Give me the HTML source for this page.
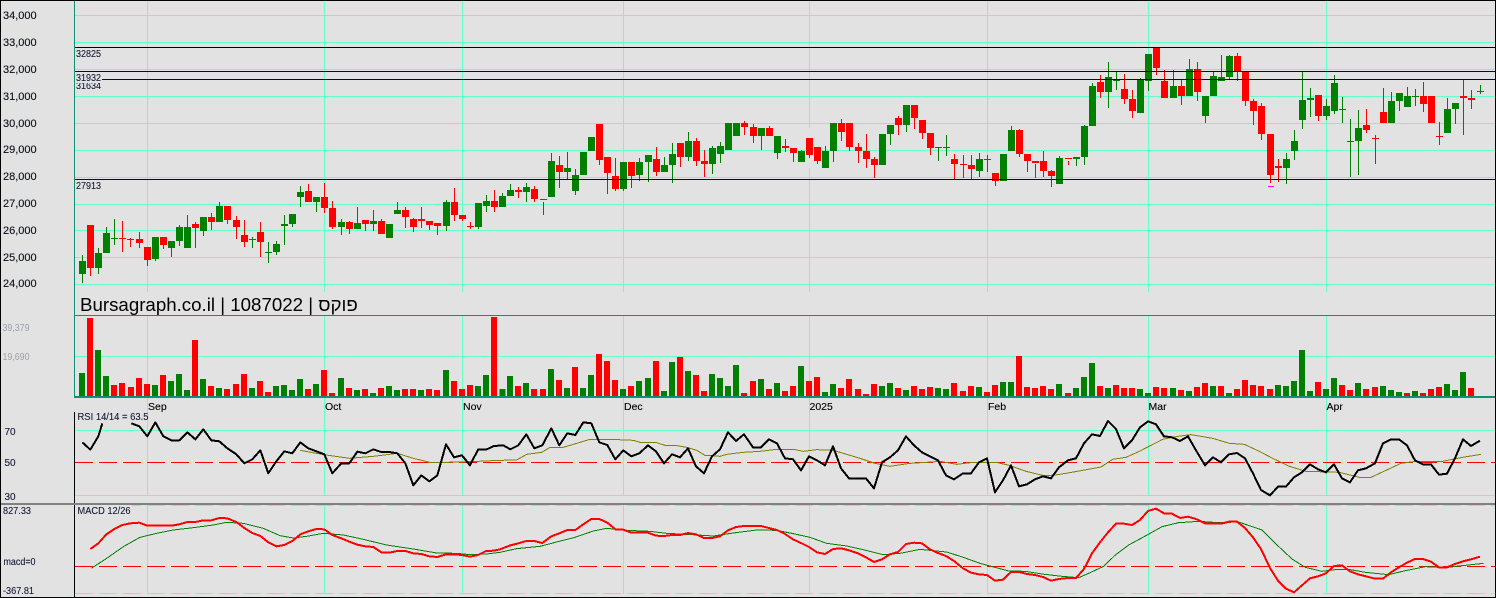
<!DOCTYPE html>
<html><head><meta charset="utf-8"><title>Bursagraph</title>
<style>
html,body{margin:0;padding:0;background:#e2e2e2;width:1496px;height:598px;overflow:hidden}
svg{display:block}
text{font-family:"Liberation Sans",Arial,sans-serif}
.l{font-size:11px;fill:#0c1018;stroke:#0c1018;stroke-width:.12}
.m{font-size:10.5px;fill:#000;stroke:#000;stroke-width:.12}
.s{font-size:10px;fill:#101530;stroke:#101530;stroke-width:.08}
.v{font-size:10px;fill:#9aa2a8}
.w{fill:none;stroke-width:3}
.b{fill:none;stroke-width:21}
.vb{fill:none;stroke-width:18}
.g{stroke:#008000}.r{stroke:#f00}
.ln{fill:none;stroke-linejoin:round}
</style></head><body>
<svg width="1496" height="598" viewBox="0 0 1496 598" xmlns="http://www.w3.org/2000/svg">
<rect width="1496" height="598" fill="#e2e2e2"/>
<g shape-rendering="crispEdges">
<!-- price grid -->
<path fill="#66ffcc" d="M74 15h1421v1h-1421zM74 42h1421v1h-1421zM74 69h1421v1h-1421zM74 96h1421v1h-1421zM74 123h1421v1h-1421zM74 150h1421v1h-1421zM74 177h1421v1h-1421zM74 204h1421v1h-1421zM74 230h1421v1h-1421zM74 257h1421v1h-1421zM74 284h1421v1h-1421z"/>
<path fill="#66ffcc" d="M147 1h1v291h-1zM324 1h1v291h-1zM462 1h1v291h-1zM623 1h1v291h-1zM809 1h1v127h-1zM809 168h1v124h-1zM987 1h1v291h-1zM1148 1h1v291h-1zM1326 1h1v291h-1z"/>
<path fill="#66ffcc" d="M147 315h1v180h-1zM324 315h1v180h-1zM462 315h1v180h-1zM623 315h1v180h-1zM809 315h1v180h-1zM987 315h1v180h-1zM1148 315h1v180h-1zM1326 315h1v180h-1z"/>
<path fill="#66ffcc" d="M147 505h1v89h-1zM324 505h1v89h-1zM462 505h1v89h-1zM623 505h1v89h-1zM809 505h1v89h-1zM987 505h1v89h-1zM1148 505h1v89h-1zM1326 505h1v89h-1z"/>
<path fill="#66ffcc" d="M74 356h1421v1h-1421zM74 430h1421v1h-1421zM74 495h1421v1h-1421z"/>
<path fill="none" stroke="#66ffcc" stroke-dasharray="18 6" d="M75 505.5H1495M75 593.5H1495"/>
<!-- crop 1 -->
<g transform="scale(.33333)">
<path class="w g" d="M247 765V849M295 744V822M319 681V759M343 657V735M466 711V783M514 723V771M538 675V738M562 645V744M610 651V708M658 606V666M757 711V744M805 726V789M829 723V765M853 645V735M877 642V681M901 558V621M949 591V636M1024 657V705M1072 621V687M1120 630V693"/>
<path class="b g" d="M247 783V822M295 759V804M319 699V759M343 714V717M466 711V777M514 723V744M538 681V723M562 681V744M610 651V693M658 618V666M757 717V720M805 756V759M829 732V756M853 672V678M877 642V672M901 576V591M949 591V606M1024 666V681M1072 669V687M1120 663V672"/>
<path class="w r" d="M271 675V828M367 663V756M391 714V741M418 696V744M442 741V798M490 711V747M586 666V744M634 639V690M682 618V672M709 648V717M733 660V741M781 666V771M925 552V606M973 549V639M997 603V687M1048 663V702M1096 660V693"/>
<path class="b r" d="M271 675V804M367 714V717M391 717V720M418 717V729M442 741V780M490 711V735M586 672V684M634 651V666M682 618V660M709 660V681M733 705V726M781 696V726M925 573V606M973 591V624M997 624V681M1048 666V687M1096 660V672"/>
</g>
<!-- crop 2 -->
<g transform="translate(375 80) scale(.33333)">
<path class="w g" d="M43 432V474M67 366V402M214 360V453M310 369V447M334 345V396M382 339V381M406 312V348M454 309V366M529 219V351M577 216V297M601 267V345M625 216V285M649 171V213M745 246V333M793 234V303M820 225V306M868 231V276M892 189V309M940 156V243M1012 198V282M1036 186V249M1060 129V210M1084 129V168"/>
<path class="b g" d="M43 432V474M67 390V402M214 366V438M310 369V441M334 363V378M382 348V381M406 330V348M454 321V336M529 243V351M577 264V276M601 285V333M625 216V285M649 171V213M745 246V327M793 246V285M820 225V246M868 255V276M892 222V255M940 183V231M1012 204V252M1036 198V222M1060 129V210M1084 129V168"/>
<path class="w r" d="M19 417V462M91 381V444M115 414V456M139 381V444M163 423V450M187 429V465M238 324V423M262 405V423M286 426V447M358 330V396M430 321V354M478 318V366M505 366V405M553 228V324M673 132V255M697 231V342M721 234V333M769 246V324M844 201V288M916 189V261M964 174V258M988 210V291M1108 123V165"/>
<path class="b r" d="M19 423V462M91 390V411M115 417V441M139 417V423M163 423V435M187 429V438M238 366V405M262 405V417M286 438V441M358 363V381M430 330V336M478 327V357M505 357V360M553 255V276M673 132V240M697 231V279M721 288V327M769 246V288M844 237V276M916 189V231M964 183V243M988 243V252M1108 129V141"/>
</g>
<!-- crop 3 -->
<g transform="translate(750 40) scale(.33333)">
<path class="w g" d="M34 264V330M82 288V357M154 330V366M226 318V384M250 249V366M397 282V375M421 255V315M469 195V276M565 321V363M589 285V348M688 339V411M712 345V396M760 342V423M784 258V333M928 348V432M979 351V378M1003 255V375M1027 129V258M1075 66V204M1099 96V150"/>
<path class="b g" d="M34 264V288M82 288V339M154 333V366M226 333V384M250 249V333M397 282V375M421 255V282M469 195V255M565 321V324M589 321V324M688 357V393M712 357V360M760 342V423M784 270V333M928 354V432M979 351V357M1003 258V351M1027 138V258M1075 111V156M1099 120V123"/>
<path class="w r" d="M10 252V309M58 258V288M106 297V336M130 324V366M178 294V354M202 321V372M274 237V303M298 249V333M325 309V369M349 282V384M373 351V414M445 228V285M493 195V267M517 240V297M541 279V345M613 342V417M640 345V414M664 345V417M736 399V438M808 267V351M832 342V396M856 372V414M880 333V411M904 390V441M955 363V375M1051 105V174"/>
<path class="b r" d="M10 261V288M58 264V288M106 318V324M130 324V339M178 294V345M202 321V363M274 249V276M298 249V321M325 321V333M349 333V357M373 357V375M445 234V255M493 195V234M517 240V279M541 279V324M613 357V372M640 372V375M664 375V387M736 399V423M808 270V342M832 342V363M856 363V369M880 363V393M904 393V408M955 354V357M1051 126V156"/>
</g>
<!-- crop 4 -->
<g transform="translate(1121 30) scale(.33333)">
<path class="w g" d="M58 144V249M82 72V183M157 120V204M205 87V198M253 198V279M277 126V198M301 75V153M325 75V147M496 369V462M520 300V390M544 126V297M568 174V261M616 207V270M640 135V252M664 201V279M688 267V441M712 240V435M811 186V279M835 189V243M859 171V231M883 177V228M979 204V309M1003 219V282M1078 165V192"/>
<path class="b g" d="M58 150V249M82 72V153M157 168V204M205 117V198M253 198V258M277 138V198M301 141V153M325 78V141M496 387V414M520 333V363M544 210V270M568 204V210M616 228V258M640 159V243M664 237V240M688 333V336M712 294V333M811 213V279M835 189V213M859 198V231M883 198V201M979 237V309M1003 219V237M1078 183V186"/>
<path class="w r" d="M10 132V222M34 180V264M106 51V135M130 120V204M181 147V225M229 96V213M349 69V153M373 126V228M397 207V285M421 219V330M448 312V459M472 387V456M592 195V273M736 237V309M763 315V402M787 174V279M907 156V246M931 198V279M955 276V345M1027 150V315M1051 180V237"/>
<path class="b r" d="M10 177V207M34 207V243M106 51V114M130 153V204M181 168V198M229 117V186M349 78V126M373 126V213M397 213V243M421 228V312M448 312V435M472 408V414M592 195V258M736 285V300M763 324V327M787 246V279M907 198V222M931 198V279M955 318V321M1027 198V204M1051 204V210"/>
</g>
<rect x="1268" y="186" width="6" height="1" fill="#ff00ff"/>
<!-- level lines -->
<path fill="none" stroke="#000" d="M74 47.5H1495"/>
<path fill="none" stroke="#000070" d="M74 71.5H1495M74 79.5H1495M74 179.5H1495"/>
</g>
<text class="s" x="76" y="89" textLength="25" lengthAdjust="spacingAndGlyphs">31634</text>
<rect x="75" y="72" width="27" height="11" fill="#e2e2e2"/>
<text class="s" x="76" y="57" textLength="25" lengthAdjust="spacingAndGlyphs">32825</text>
<text class="s" x="76" y="81" textLength="25" lengthAdjust="spacingAndGlyphs">31932</text>
<text class="s" x="76" y="189" textLength="25" lengthAdjust="spacingAndGlyphs">27913</text>
<g class="axis">
<text class="l" x="3" y="19">34,000</text>
<text class="l" x="3" y="46">33,000</text>
<text class="l" x="3" y="73">32,000</text>
<text class="l" x="3" y="100">31,000</text>
<text class="l" x="3" y="127">30,000</text>
<text class="l" x="3" y="153">29,000</text>
<text class="l" x="3" y="180">28,000</text>
<text class="l" x="3" y="207">27,000</text>
<text class="l" x="3" y="234">26,000</text>
<text class="l" x="3" y="261">25,000</text>
<text class="l" x="3" y="287">24,000</text>
</g>
<text x="80" y="311" font-size="18.7" fill="#000">Bursagraph.co.il | 1087022 | פוקס</text>
<text class="v" x="2.5" y="331" textLength="27" lengthAdjust="spacingAndGlyphs">39,379</text>
<text class="v" x="2.5" y="360" textLength="27" lengthAdjust="spacingAndGlyphs">19,690</text>
<g shape-rendering="crispEdges">
<!-- volume -->
<g transform="translate(0 290) scale(.33333)">
<path class="vb g" d="M246 249V318M294 180V318M318 258V318M465 285V318M513 273V318M537 252V318M561 300V318M609 267V318M657 294V318M756 294V318M828 288V318M852 285V318M876 300V318M900 267V318M948 282V318M1023 264V318M1071 300V318M1119 309V318M1167 288V318M1191 300V318M1263 300V318M1338 240V318M1434 288V318M1458 255V318"/>
<path class="vb r" d="M270 84V318M342 285V318M366 279V318M393 291V318M417 264V318M441 282V318M489 255V318M585 150V318M633 288V318M681 297V318M708 282V318M732 252V318M780 273V318M804 306V318M924 297V318M972 240V318M996 309V318M1047 294V318M1095 297V318M1143 294V318M1215 297V318M1239 297V318M1287 297V318M1311 300V318M1362 273V318M1386 297V318M1410 285V318M1482 81V318"/>
</g>
<g transform="translate(500 310) scale(.33333)">
<path class="vb g" d="M7 237V258M30 198V258M78 219V258M153 177V258M201 234V258M249 234V258M273 195V258M369 237V258M417 213V258M444 204V258M492 243V258M516 156V258M564 183V258M636 192V258M660 204V258M684 228V258M708 165V258M783 207V258M831 219V258M903 168V258M975 246V258M999 222V258M1146 228V258M1170 219V258M1218 240V258M1314 234V258M1338 237V258M1437 231V258"/>
<path class="vb r" d="M54 228V258M102 237V258M129 237V258M177 210V258M225 171V258M297 132V258M321 153V258M345 210V258M393 228V258M468 153V258M540 141V258M588 195V258M612 243V258M732 249V258M759 213V258M807 237V258M855 243V258M879 228V258M927 213V258M951 201V258M1023 234V258M1047 207V258M1074 237V258M1098 252V258M1122 222V258M1194 234V258M1242 228V258M1266 237V258M1290 231V258M1362 219V258M1389 243V258M1413 228V258M1461 246V258M1485 225V258"/>
</g>
<g transform="translate(996 310) scale(.33333)">
<path class="vb g" d="M21 216V258M45 216V258M189 222V258M240 234V258M264 201V258M288 159V258M336 234V258M432 237V258M456 249V258M531 234V258M579 243V258M651 228V258M699 249V258M846 225V258M870 228V258M894 213V258M918 120V258M942 243V258M990 237V258M1014 204V258M1086 219V258M1161 228V258M1185 240V258M1209 246V258M1257 243V258M1353 222V258M1377 240V258M1401 186V258"/>
<path class="vb r" d="M69 138V258M93 231V258M117 234V258M141 228V258M165 237V258M216 249V258M312 228V258M360 225V258M384 234V258M408 234V258M480 231V258M504 234V258M555 240V258M603 231V258M627 219V258M675 228V258M723 237V258M747 210V258M771 225V258M795 228V258M822 237V258M966 216V258M1038 225V258M1062 240V258M1110 237V258M1137 231V258M1233 249V258M1281 249V258M1305 237V258M1329 231V258M1425 234V258"/>
</g>
<rect x="74" y="396" width="1421" height="2" fill="#109070"/>
<rect x="75" y="315" width="1420" height="1" fill="#109070"/>
<rect x="74" y="1" width="1" height="397" fill="#109070"/>
<!-- RSI / MACD reference lines -->
<path fill="none" stroke="#f00" stroke-dasharray="18 6" d="M75 462.5H1495M75 566.5H1495"/>
<rect x="0" y="503" width="1496" height="2" fill="#808080"/>
<rect x="75" y="505" width="57" height="11" fill="#e2e2e2"/>
<rect x="74" y="412" width="1" height="91" fill="#000"/>
<rect x="74" y="505" width="1" height="92" fill="#000"/>
<!-- frame -->
<rect x="0" y="0" width="1496" height="1" fill="#000"/>
<rect x="0" y="0" width="1" height="598" fill="#000"/>
<rect x="1495" y="0" width="1" height="598" fill="#000"/>
<rect x="0" y="597" width="1496" height="1" fill="#000"/>
</g>
<text class="m" x="148" y="410">Sep</text>
<text class="m" x="325" y="410">Oct</text>
<text class="m" x="463" y="410">Nov</text>
<text class="m" x="624" y="410">Dec</text>
<text class="m" x="809.5" y="410">2025</text>
<text class="m" x="988" y="410">Feb</text>
<text class="m" x="1148.5" y="410">Mar</text>
<text class="m" x="1326.5" y="410">Apr</text>
<text class="s" x="77.5" y="420" textLength="71" lengthAdjust="spacingAndGlyphs">RSI 14/14 = 63.5</text>
<text class="s" x="77.5" y="514" textLength="53" lengthAdjust="spacingAndGlyphs">MACD 12/26</text>
<text class="s" x="4.5" y="435">70</text>
<text class="s" x="4.5" y="466">50</text>
<text class="s" x="4.5" y="500">30</text>
<text class="s" x="3" y="514" textLength="28" lengthAdjust="spacingAndGlyphs">827.33</text>
<text class="s" x="3.5" y="565" textLength="32" lengthAdjust="spacingAndGlyphs">macd=0</text>
<text class="s" x="3" y="594" textLength="31" lengthAdjust="spacingAndGlyphs">-367.81</text>
<!-- RSI MA (olive) -->
<g transform="translate(0 405) scale(.33333)" shape-rendering="crispEdges">
<polyline class="ln" stroke="#808000" stroke-width="3" points="901,136 949,145 985,151 1048,160 1120,154 1192,145 1240,160 1290,172 1340,172 1434,169 1500,166 1550,165 1580,148 1625,142 1650,127 1690,127 1740,112 1770,103 1830,103 1900,106 1920,112 1970,113 1995,121 2025,121 2060,127 2090,136 2115,151 2160,154 2180,148 2230,142 2280,139 2330,133 2380,133 2410,139 2450,134 2500,136 2540,148 2580,160 2625,175 2670,184 2730,175 2780,172 2820,169 2870,178 2920,172 2988,172 3028,181 3078,199 3128,211 3158,211 3198,205 3248,196 3303,186 3338,163 3378,157 3418,139 3488,103 3533,94 3573,89 3638,100 3688,115 3733,118 3778,139 3818,160 3868,184 3918,199 4018,202 4078,217 4113,217 4158,196 4203,175 4248,169 4328,169 4388,157 4443,148"/>
<!-- RSI (black) -->
<polyline class="ln" stroke="#000" stroke-width="6" points="247,112 271,134 295,94 307,55"/>
<polyline class="ln" stroke="#000" stroke-width="6" points="394,55 418,64 442,94 466,52 490,94 514,106 538,106 562,82 586,103 610,73 634,106 658,109 682,130 709,148 733,175 757,163 781,136 805,205 829,169 853,139 877,145 901,112 925,130 949,139 973,148 997,205 1024,175 1048,175 1072,140 1096,145 1120,133 1144,141 1168,141 1192,145 1216,175 1240,241 1264,211 1288,229 1312,211 1338,118 1362,157 1386,151 1410,181 1434,134 1458,134 1482,123 1510,121 1531,133 1555,121 1579,88 1603,130 1627,121 1654,70 1678,121 1702,85 1726,90 1750,52 1774,55 1798,112 1822,120 1846,163 1870,136 1894,154 1918,145 1944,121 1968,139 1992,175 2016,148 2040,157 2064,130 2088,184 2112,205 2136,154 2160,133 2184,82 2208,108 2232,88 2259,127 2283,127 2307,103 2331,115 2355,160 2379,163 2403,196 2427,154 2451,166 2475,181 2499,124 2523,190 2547,220 2574,220 2598,220 2622,250 2646,172 2670,157 2694,136 2718,94 2742,121 2766,142 2790,154 2814,166 2838,211 2862,223 2889,205 2913,205 2937,172 2961,160 2985,262 3009,226 3033,181 3057,244 3081,238 3105,223 3129,214 3153,220 3177,187 3204,166 3228,160 3252,115 3276,88 3300,93 3324,48 3348,72 3372,130 3396,106 3420,67 3444,49 3468,58 3492,94 3516,97 3540,108 3564,94 3588,136 3615,181 3639,157 3663,172 3687,148 3711,144 3735,160 3759,205 3783,255 3810,271 3834,245 3858,245 3882,217 3906,202 3930,178 3954,193 3978,202 4002,178 4026,220 4050,232 4074,196 4098,190 4125,175 4149,115 4173,103 4197,103 4221,121 4245,166 4269,178 4293,178 4317,209 4341,206 4365,160 4389,103 4413,123 4440,107"/>
<!-- MACD signal (green) -->
<polyline class="ln" stroke="#008000" stroke-width="3" points="274,490 320,460 370,425 420,397 470,385 520,375 580,368 640,360 680,352 730,355 790,370 840,392 880,399 920,394 970,385 1030,390 1090,403 1160,420 1240,432 1310,444 1370,445 1410,449 1460,447 1500,442 1550,431 1620,424 1670,411 1725,397 1780,378 1820,370 1880,376 1950,379 2000,385 2060,388 2140,393 2200,384 2270,375 2330,376 2380,386 2430,397 2480,415 2540,423 2590,434 2650,449 2700,445 2760,433 2840,441 2890,457 2940,475 2996,490 3026,498 3076,499 3126,507 3186,514 3236,518 3266,505 3311,484 3346,450 3386,420 3436,393 3486,365 3536,353 3596,349 3656,353 3716,351 3786,375 3826,415 3876,462 3916,487 3966,499 4006,494 4046,493 4096,502 4166,509 4216,497 4276,485 4336,488 4386,482 4451,475"/>
<!-- MACD (red) -->
<polyline class="ln" stroke="#f00" stroke-width="6" points="271,432 295,415 319,388 343,372 367,360 391,355 418,353 442,362 466,362 490,362 514,362 538,358 562,351 586,351 610,346 634,346 658,339 682,340 709,351 733,369 757,384 781,393 805,412 829,424 853,420 877,408 901,388 925,379 949,372 973,373 997,390 1024,400 1048,410 1072,419 1096,424 1120,426 1144,442 1168,443 1192,438 1216,438 1240,445 1264,447 1288,454 1312,456 1338,448 1362,448 1386,450 1410,455 1434,450 1458,438 1482,437 1500,433 1531,421 1555,415 1579,408 1603,408 1627,414 1654,394 1678,385 1702,375 1726,375 1750,358 1774,342 1798,342 1822,353 1846,373 1870,374 1894,383 1918,383 1944,383 1968,392 1992,393 2016,390 2040,390 2064,384 2088,388 2112,399 2136,399 2160,394 2184,376 2208,366 2232,363 2259,363 2283,363 2307,369 2331,375 2355,387 2379,403 2403,414 2427,426 2451,442 2475,447 2499,432 2523,430 2547,436 2574,445 2598,457 2622,471 2646,463 2670,448 2694,441 2718,417 2742,413 2766,415 2790,433 2814,444 2838,453 2862,468 2889,490 2913,503 2937,508 2961,510 2985,527 3009,524 3033,501 3057,501 3081,507 3105,510 3129,516 3153,527 3177,522 3204,519 3228,519 3252,492 3276,445 3300,412 3324,382 3348,356 3372,356 3396,360 3420,345 3444,318 3468,311 3492,325 3516,326 3540,339 3564,335 3588,342 3615,355 3639,356 3663,356 3687,350 3711,350 3735,369 3759,397 3783,432 3810,489 3834,527 3858,551 3882,562 3906,541 3930,520 3954,514 3978,505 4002,483 4026,481 4050,499 4074,508 4098,514 4125,521 4149,521 4173,502 4197,487 4221,473 4245,462 4269,462 4293,470 4317,487 4341,487 4365,477 4389,469 4413,463 4440,455"/>
</g>
</svg>
</body></html>
